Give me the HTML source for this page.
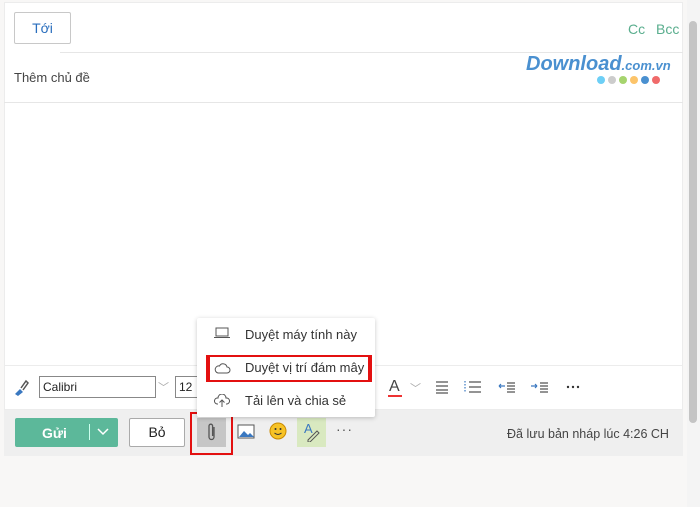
<!DOCTYPE html>
<html><head><meta charset="utf-8"><style>
*{margin:0;padding:0;box-sizing:border-box}
body{width:700px;height:507px;background:#f8f7f6;font-family:"Liberation Sans",sans-serif;position:relative;overflow:hidden;color:#333}
.abs{position:absolute}
</style></head><body>
<div class="abs" style="left:4px;top:2px;width:679px;height:408px;background:#fff;border:1px solid #ececec"></div>
<div class="abs" style="left:4px;top:410px;width:679px;height:46px;background:#efefef"></div>
<div class="abs" style="left:14px;top:12px;width:57px;height:32px;border:1px solid #c8c8c8;border-radius:2px;color:#2a6ebd;font-size:14px;text-align:center;line-height:30px">Tới</div>
<div class="abs" style="left:628px;top:21px;color:#5aae8e;font-size:14px">Cc</div>
<div class="abs" style="left:656px;top:21px;color:#5aae8e;font-size:14px">Bcc</div>
<div class="abs" style="left:60px;top:52px;width:623px;height:1px;background:#e6e6e6"></div>
<div class="abs" style="left:14px;top:70px;font-size:13px;color:#444">Thêm chủ đề</div>
<div class="abs" style="left:526px;top:53px;font-size:20px;font-weight:bold;font-style:italic;color:#4a90d0">Download<span style="font-size:13px">.com.vn</span></div>
<div class="abs" style="left:597px;top:76px;display:flex;gap:3px">
<i style="width:8px;height:8px;border-radius:50%;background:#6dcff6"></i><i style="width:8px;height:8px;border-radius:50%;background:#ccc"></i><i style="width:8px;height:8px;border-radius:50%;background:#a6d46e"></i><i style="width:8px;height:8px;border-radius:50%;background:#fcc46a"></i><i style="width:8px;height:8px;border-radius:50%;background:#4a90d0"></i><i style="width:8px;height:8px;border-radius:50%;background:#f06a6a"></i></div>
<div class="abs" style="left:4px;top:102px;width:679px;height:1px;background:#e6e6e6"></div>
<div class="abs" style="left:4px;top:365px;width:679px;height:1px;background:#ececec"></div>
<svg class="abs" style="left:12px;top:379px" width="18" height="18" viewBox="0 0 18 18"><path d="M3 15 L8 10 L11 13 L6 17Z" fill="#3a78c0"/><path d="M9 9 L14 2 L16 4 L11 11" stroke="#555" stroke-width="1.5" fill="none"/></svg>
<div class="abs" style="left:39px;top:376px;width:117px;height:22px;border:1px solid #888;font-size:12px;padding-left:3px;line-height:20px;color:#222">Calibri</div>
<div class="abs" style="left:158px;top:379px;color:#aaa;font-size:11px">﹀</div>
<div class="abs" style="left:175px;top:376px;width:22px;height:22px;border:1px solid #888;border-right:none;font-size:12px;padding-left:3px;line-height:20px;color:#222">12</div>
<div class="abs" style="left:389px;top:378px;font-size:16px;color:#444">A</div>
<div class="abs" style="left:388px;top:395px;width:14px;height:2px;background:#e33"></div>
<div class="abs" style="left:410px;top:380px;color:#aaa;font-size:11px">﹀</div>
<svg class="abs" style="left:432px;top:380px" width="160" height="14"><g stroke="#555" stroke-width="1.2"><path d="M4 2h12M4 6h12M4 10h12M4 13h12"/><path d="M37 2h12M37 7h12M37 12h12"/><path d="M75 3h8M75 6h8M75 9h8M75 12h8"/><path d="M108 3h8M108 6h8M108 9h8M108 12h8"/></g><g stroke="#3a78c0" stroke-width="1.2"><path d="M33 1v12" stroke-dasharray="1.5 1.5"/><path d="M67 6h6M67 6l2-2M67 6l2 2"/><path d="M99 6h6M105 6l-2-2M105 6l-2 2"/></g><g fill="#333"><circle cx="136" cy="7" r="1.2"/><circle cx="141" cy="7" r="1.2"/><circle cx="146" cy="7" r="1.2"/></g></svg>
<div class="abs" style="left:15px;top:418px;width:103px;height:29px;background:#5cb89a;border-radius:2px;color:#fff;font-size:14px;font-weight:bold"><span class="abs" style="left:27px;top:7px">Gửi</span><span class="abs" style="left:74px;top:6px;width:1px;height:16px;background:#cfe"></span><svg class="abs" style="left:82px;top:10px" width="12" height="8"><path d="M1 1l5 5 5-5" stroke="#fff" stroke-width="1.5" fill="none"/></svg></div>
<div class="abs" style="left:129px;top:418px;width:56px;height:29px;background:#fff;border:1px solid #aaa;border-radius:2px;text-align:center;line-height:27px;font-size:14px;color:#222">Bỏ</div>
<div class="abs" style="left:197px;top:418px;width:29px;height:29px;background:#c6c6c6"></div>
<svg class="abs" style="left:206px;top:423px" width="12" height="20"><path d="M8 4v10a2.5 2.5 0 0 1-5 0V3a1.8 1.8 0 0 1 3.6 0v10" stroke="#555" stroke-width="1.3" fill="none"/></svg>
<div class="abs" style="left:190px;top:412px;width:43px;height:43px;border:2px solid #e31010"></div>
<svg class="abs" style="left:237px;top:424px" width="18" height="15"><rect x="1" y="1" width="16" height="13" fill="#fff" stroke="#555"/><path d="M2 13l5-6 4 4 2-2 4 4z" fill="#3a78c0"/></svg>
<svg class="abs" style="left:269px;top:422px" width="18" height="18"><circle cx="9" cy="9" r="8" fill="#f7c326" stroke="#c98a00"/><circle cx="6.5" cy="7" r="1" fill="#333"/><circle cx="11.5" cy="7" r="1" fill="#333"/><path d="M5.5 11q3.5 3 7 0" stroke="#333" fill="none"/></svg>
<div class="abs" style="left:297px;top:418px;width:29px;height:29px;background:#d9e9c0"></div>
<div class="abs" style="left:304px;top:421px;font-size:13px;color:#3a78c0">A</div>
<svg class="abs" style="left:306px;top:428px" width="14" height="14"><path d="M2 12l9-9 2 2-9 9H2z" fill="none" stroke="#555"/></svg>
<div class="abs" style="left:336px;top:421px;font-size:14px;color:#555;letter-spacing:1px">···</div>
<div class="abs" style="left:507px;top:427px;font-size:12.5px;color:#444">Đã lưu bản nháp lúc 4:26 CH</div>
<div class="abs" style="left:197px;top:318px;width:178px;height:99px;background:#fff;box-shadow:0 1px 5px rgba(0,0,0,.22);border-radius:2px"></div>
<svg class="abs" style="left:213px;top:327px" width="18" height="12"><rect x="3" y="1" width="12" height="8" fill="none" stroke="#555"/><path d="M1 10.5h16" stroke="#555"/></svg>
<div class="abs" style="left:245px;top:327px;font-size:13px;color:#333">Duyệt máy tính này</div>
<div class="abs" style="left:206px;top:355px;width:166px;height:27px;border:2px solid #e31010;border-left-width:4px;border-right-width:4px"></div>
<svg class="abs" style="left:213px;top:362px" width="18" height="12"><path d="M5 11h9a3 3 0 0 0 0-6 4 4 0 0 0-7.5-1A3.5 3.5 0 0 0 5 11z" fill="none" stroke="#555"/></svg>
<div class="abs" style="left:245px;top:360px;font-size:13px;color:#333">Duyệt vị trí đám mây</div>
<svg class="abs" style="left:213px;top:394px" width="18" height="14"><path d="M5 10H4a3 3 0 0 1 1-6 4 4 0 0 1 8 0 3 3 0 0 1 1 6h-1M9 13V6M6.5 8.5L9 6l2.5 2.5" fill="none" stroke="#555"/></svg>
<div class="abs" style="left:245px;top:393px;font-size:13px;color:#333">Tải lên và chia sẻ</div>
<div class="abs" style="left:687px;top:0;width:13px;height:507px;background:#f4f4f4"></div>
<div class="abs" style="left:689px;top:21px;width:8px;height:402px;background:#c4c4c4;border-radius:4px"></div>
</body></html>
